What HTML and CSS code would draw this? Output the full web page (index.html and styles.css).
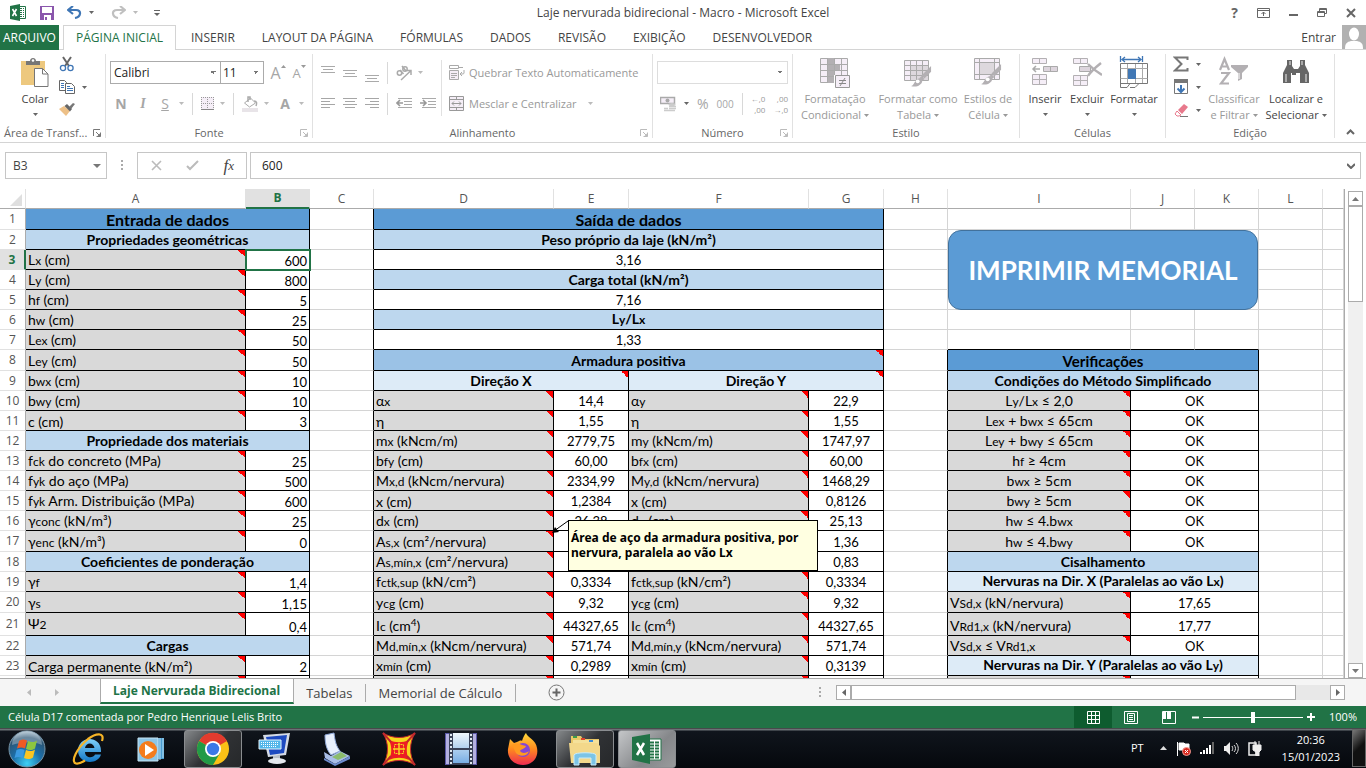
FILE: index.html
```html
<!DOCTYPE html>
<html lang="pt-BR">
<head>
<meta charset="utf-8">
<title>Laje nervurada bidirecional - Macro - Microsoft Excel</title>
<link rel="stylesheet" href="styles.css">
</head>
<body>
<svg class="defs" aria-hidden="true">
  <symbol id="arrow" viewBox="0 0 5 3"><path d="M0 0h5L2.500 3z" fill="currentColor"/></symbol>
  <symbol id="launch" viewBox="0 0 8 8"><path d="M.5 7V.5H7M3 3l3 3M7.500 3.500v4h-4" fill="none" stroke="currentColor"/><path d="M7.500 4v3.500H4z" fill="currentColor"/></symbol>
  <symbol id="al" viewBox="0 0 14 11"><path d="M0 .5h14M0 3.500h9M0 6.500h14M0 9.500h9" stroke="currentColor"/></symbol>
  <symbol id="ac" viewBox="0 0 14 11"><path d="M0 .5h14M2 3.500h10M0 6.500h14M2 9.500h10" stroke="currentColor"/></symbol>
  <symbol id="ar" viewBox="0 0 14 11"><path d="M0 .5h14M5 3.500h9M0 6.500h14M5 9.500h9" stroke="currentColor"/></symbol>
  <symbol id="brush" viewBox="0 0 24 24"><path d="M22 1v6l-7 7-3-3z" fill="#b3b0b3"/><path d="M12 11.500l3 3-2 2-3-3z" fill="#b3b0b3"/><path d="M9 14c3-1 5 2 3 5-3 4-8 4-11 3 4-1 3-6 8-8z" fill="#b3b0b3"/><circle cx="8" cy="17" r="2" fill="#fff"/></symbol>
</svg>

<header class="titlebar">
  <div class="quick">
    <svg width="17" height="17" viewBox="0 0 17 17"><path d="M8 2.500h7.500v12H8" fill="#fff" stroke="#217346"/><path d="M10 4.500h4M10 6.500h4M10 8.500h4M10 10.500h4M10 12.500h4" stroke="#217346" stroke-dasharray="2 1"/><path d="M0 2l10-2v17L0 15z" fill="#217346"/><path d="M2.500 5l4 7M6.500 5l-4 7" stroke="#fff" stroke-width="1.600"/></svg>
    <button class="plain" aria-label="Salvar"><svg width="14" height="14" viewBox="0 0 14 14"><path d="M0 0h14v14H0z" fill="#8a56ac"/><path d="M2 1h10v6H2zM4 9h7v5H4z" fill="#fff"/><path d="M5 11h2v3H5z" fill="#8a56ac"/></svg></button>
    <button class="plain" aria-label="Desfazer"><svg width="15" height="13" viewBox="0 0 15 13"><path d="M2 4h7c6 0 5 7-1 8" fill="none" stroke="#3f76b5" stroke-width="2.200"/><path d="M6 0L1 4l5 4" fill="none" stroke="#3f76b5" stroke-width="2.200"/></svg></button>
    <svg class="ar"><use href="#arrow"/></svg>
    <button class="plain redo" aria-label="Refazer"><svg width="15" height="13" viewBox="0 0 15 13"><path d="M13 4H6C0 4 1 11 7 12" fill="none" stroke="#c0c0c0" stroke-width="2.200"/><path d="M9 0l5 4-5 4" fill="none" stroke="#c0c0c0" stroke-width="2.200"/></svg></button>
    <svg class="ar off"><use href="#arrow"/></svg>
    <svg class="more" width="6" height="6" viewBox="0 0 6 6"><path d="M0 .5h6" stroke="#666"/><path d="M0 3h6L3 6z" fill="#666"/></svg>
  </div>
  <h1>Laje nervurada bidirecional - Macro - Microsoft Excel</h1>
  <div class="winbtns">
    <button class="plain help" aria-label="Ajuda">?</button>
    <button class="plain" aria-label="Opções da faixa"><svg width="13" height="10" viewBox="0 0 13 10"><path d="M.5.5h12v9H.5zM1 2.500h11M6.500 8V4M4.500 6l2-2 2 2" fill="none" stroke="#666"/></svg></button>
    <button class="plain" aria-label="Minimizar"><svg width="9" height="10" viewBox="0 0 9 10"><path d="M0 7h9" stroke="#666" stroke-width="2"/></svg></button>
    <button class="plain" aria-label="Restaurar"><svg width="10" height="10" viewBox="0 0 10 10"><path d="M.5 3.500h7v5h-7zM2.500 3V.5h7v5H8M.5 4.500h7M2.500 1.500h7" fill="none" stroke="#666"/></svg></button>
    <button class="plain" aria-label="Fechar"><svg width="10" height="10" viewBox="0 0 10 10"><path d="M1 1l8 8M9 1L1 9" stroke="#666" stroke-width="2"/></svg></button>
  </div>
</header>

<nav class="tabs">
  <a class="file" href="#arquivo">ARQUIVO</a>
  <a class="on" href="#inicio">PÁGINA INICIAL</a>
  <a href="#inserir">INSERIR</a>
  <a href="#layout">LAYOUT DA PÁGINA</a>
  <a href="#formulas">FÓRMULAS</a>
  <a href="#dados">DADOS</a>
  <a href="#revisao">REVISÃO</a>
  <a href="#exibicao">EXIBIÇÃO</a>
  <a href="#dev">DESENVOLVEDOR</a>
  <a class="login" href="#entrar">Entrar
    <svg width="24" height="24" viewBox="0 0 24 24"><path d="M0 0h24v24H0z" fill="#b1b1b1"/><ellipse cx="12" cy="9" rx="5" ry="6.500" fill="#fff"/><path d="M3 24c0-6 2-7 6-8h6c4 1 6 2 6 8z" fill="#fff"/></svg></a>
</nav>

<section class="ribbon">
  <div class="group clip">
    <div class="body">
      <button class="big"><svg width="30" height="32" viewBox="0 0 30 32"><path d="M1 5h24v24H1z" fill="#edc87e"/><path d="M6 9V5h4c0-4 6-4 6 0h4v4z" fill="#767676"/><circle cx="13" cy="4.500" r="1.300" fill="#fff"/><path d="M14.500 12.500h8l5.500 5.500v12.500H14.500z" fill="#fff" stroke="#767676"/><path d="M22.500 12.500V18H28" fill="none" stroke="#767676"/></svg><span>Colar</span><svg class="ar"><use href="#arrow"/></svg></button>
      <div class="stack">
        <button class="plain" aria-label="Recortar"><svg width="16" height="16" viewBox="0 0 16 16"><path d="M4 1l6 9M12 1L6 10" stroke="#666" stroke-width="2"/><circle cx="4" cy="12" r="2.600" fill="none" stroke="#3f76b5" stroke-width="1.300"/><circle cx="11.500" cy="12" r="2.600" fill="none" stroke="#3f76b5" stroke-width="1.300"/></svg></button>
        <span><button class="plain" aria-label="Copiar"><svg width="16" height="16" viewBox="0 0 16 16"><path d="M.5 1.500h5l2 2v8h-7z" fill="#fff" stroke="#666"/><path d="M6.500 4.500h6l3 3v7h-9z" fill="#fff" stroke="#666"/><path d="M2 4.500h3M2 6.500h3M2 8.500h3M8 7.500h3M8 9.500h6M8 11.500h6" stroke="#3f76b5"/></svg></button><svg class="ar"><use href="#arrow"/></svg></span>
        <button class="plain" aria-label="Pincel de Formatação"><svg width="16" height="14" viewBox="0 0 16 14"><path d="M0 7l5-3 6 5-4 5z" fill="#edc087"/><path d="M5.500 4L8 2l5 5-2 2.500z" fill="#666"/><path d="M10 5l4-4 2 1-4 5z" fill="#777"/></svg></button>
      </div>
    </div>
    <footer>Área de Transf... <svg><use href="#launch"/></svg></footer>
  </div>

  <div class="group font">
    <div class="body rows">
      <div class="row">
        <select class="fname" aria-label="Fonte"><option>Calibri</option></select><select class="fsize" aria-label="Tamanho"><option>11</option></select>
        <button class="plain g grow" aria-label="Aumentar">A<svg width="5" height="3"><path d="M0 3h5L2.500 0z" fill="#999"/></svg></button>
        <button class="plain g shrink" aria-label="Diminuir">A<svg width="5" height="3"><path d="M0 0h5L2.500 3z" fill="#999"/></svg></button>
      </div>
      <div class="row fmt">
        <button class="plain g"><b>N</b></button>
        <button class="plain g"><i class="it">I</i></button>
        <button class="plain g"><u>S</u></button>
        <svg class="ar off"><use href="#arrow"/></svg>
        <span class="sep"></span>
        <button class="plain" aria-label="Bordas"><svg width="13" height="13" viewBox="0 0 13 13"><path d="M0 0h13v13H0z" fill="#f5eef7"/><path d="M.5 0v12M6.500 0v12M12.500 0v12M0 .5h13M0 6.500h13" stroke="#999" stroke-dasharray="1 1"/><path d="M0 12.500h13" stroke="#888"/></svg></button>
        <svg class="ar off"><use href="#arrow"/></svg>
        <span class="sep"></span>
        <button class="plain" aria-label="Preenchimento"><svg width="16" height="16" viewBox="0 0 16 16"><path d="M0 12h16v4H0z" fill="#e8e4e8"/><path d="M2.500 7l6-5 5 5-6 4z" fill="#fff" stroke="#aaa"/><path d="M6 6V1h2v3M12 5c3 0 3 2 2 5" fill="none" stroke="#aaa" stroke-width="1.500"/></svg></button>
        <svg class="ar off"><use href="#arrow"/></svg>
        <button class="plain g"><b class="col">A</b></button>
        <svg class="ar off"><use href="#arrow"/></svg>
      </div>
    </div>
    <footer class="c">Fonte <svg class="off"><use href="#launch"/></svg></footer>
  </div>

  <div class="group align">
    <div class="body">
      <div class="rows">
        <div class="row">
          <button class="plain g" aria-label="Acima"><svg width="14" height="20" viewBox="0 0 14 20"><path d="M0 3.500h14M2 6.500h10M0 9.500h14" stroke="#aaa"/></svg></button>
          <button class="plain g" aria-label="Meio"><svg width="14" height="20" viewBox="0 0 14 20"><path d="M0 7.500h14M2 10.500h10M0 13.500h14" stroke="#aaa"/></svg></button>
          <button class="plain g" aria-label="Abaixo"><svg width="14" height="20" viewBox="0 0 14 20"><path d="M0 12.500h14M2 15.500h10M0 18.500h14" stroke="#aaa"/></svg></button>
          <span class="sep"></span>
          <button class="plain g" aria-label="Orientação"><svg width="16" height="16" viewBox="0 0 16 16"><g fill="none" stroke="#aaa" stroke-width="1.500"><circle cx="3.500" cy="8" r="2.200"/><path d="M4 5l3.500 4M6 1l4 5"/><circle cx="9" cy="4" r="2.200"/><path d="M5 15l9.500-9M11 5.500h4V10"/></g></svg></button>
          <svg class="ar off"><use href="#arrow"/></svg>
        </div>
        <div class="row">
          <button class="plain g" aria-label="Esquerda"><svg width="14" height="11"><use href="#al"/></svg></button>
          <button class="plain g" aria-label="Centro"><svg width="14" height="11"><use href="#ac"/></svg></button>
          <button class="plain g" aria-label="Direita"><svg width="14" height="11"><use href="#ar"/></svg></button>
          <span class="sep"></span>
          <button class="plain g" aria-label="Diminuir recuo"><svg width="16" height="11" viewBox="0 0 16 11"><path d="M2 .5h14M8 3.500h8M8 6.500h8M2 9.500h14" stroke="#aaa"/><path d="M7 5H1M4 2L1 5l3 3" fill="none" stroke="#999" stroke-width="1.600"/></svg></button>
          <button class="plain g" aria-label="Aumentar recuo"><svg width="16" height="11" viewBox="0 0 16 11"><path d="M2 .5h14M8 3.500h8M8 6.500h8M2 9.500h14" stroke="#aaa"/><path d="M0 5h6M3 2l3 3-3 3" fill="none" stroke="#999" stroke-width="1.600"/></svg></button>
        </div>
      </div>
      <div class="rows texts">
        <button class="plain"><svg width="16" height="16" viewBox="0 0 16 16"><path d="M.5.5h9v3h-9zM9.500 2.500H14" fill="none" stroke="#aaa"/><path d="M.5 5.500h9v9h-9z" fill="#f5eef7" stroke="#aaa"/><path d="M2 8.500h6M2 10.500h6M2 12.500h4" stroke="#aaa"/><path d="M15 5v3c0 1-1 1-4 1M13 7l-2 2 2 2" fill="none" stroke="#aaa"/></svg>Quebrar Texto Automaticamente</button>
        <button class="plain"><svg width="16" height="15" viewBox="0 0 16 15"><path d="M.5.5h14v14H.5z" fill="#f5eef7" stroke="#999"/><path d="M0 3.500h15M0 11.500h15M7.500 0v3M7.500 12v3M3 7.500h9M5 5.500l-2 2 2 2M10 5.500l2 2-2 2" fill="none" stroke="#999"/></svg>Mesclar e Centralizar<svg class="ar off"><use href="#arrow"/></svg></button>
      </div>
    </div>
    <footer class="c">Alinhamento <svg class="off"><use href="#launch"/></svg></footer>
  </div>

  <div class="group number">
    <div class="body rows">
      <select class="fmtsel" aria-label="Formato de número"><option></option></select>
      <div class="row">
        <button class="plain g" aria-label="Moeda"><svg width="16" height="16" viewBox="0 0 16 16"><path d="M.5 1.500h14v6H.5z" fill="#f5eef7" stroke="#aaa" stroke-width="1.500"/><circle cx="7.500" cy="4.500" r="2" fill="#aaa"/><ellipse cx="12" cy="8.500" rx="3.500" ry="1.500" fill="#ccc"/><path d="M9 10.500h7M9 12.500h7M4 12.500h4M4 14.500h11" stroke="#ccc" stroke-width="1.500"/></svg></button>
        <svg class="ar"><use href="#arrow"/></svg>
        <button class="plain g pct">%</button>
        <button class="plain g mil">000</button>
        <span class="sep"></span>
        <button class="plain dec" aria-label="Aumentar casas"><span>←,0</span><span>,00</span></button>
        <button class="plain dec" aria-label="Diminuir casas"><span>,00</span><span>→,0</span></button>
      </div>
    </div>
    <footer class="c">Número <svg class="off"><use href="#launch"/></svg></footer>
  </div>

  <div class="group style">
    <div class="body">
      <button class="big dis w84"><svg width="30" height="32" viewBox="0 0 30 32"><path d="M.5 2.500h27v24H.5z" fill="#f5eef7" stroke="#aaa"/><path d="M8 2h6v25H8zM8 9h12v5H8z" fill="#b3b0b3"/><path d="M.5 8.500h27M.5 14.500h27M.5 20.500h27M7.500 2v24M14.500 2v24M21.500 2v24" stroke="#aaa"/><path d="M14 19h16v13H14z" fill="#fff"/><path d="M15.500 19.500h14v12h-14z" fill="#f5eef7" stroke="#999"/><path d="M19 24.500h7M19 27.500h7M25 22l-5 8" stroke="#888"/></svg><span>Formatação<br>Condicional <svg class="ar"><use href="#arrow"/></svg></span></button>
      <button class="big dis w82"><svg width="30" height="32" viewBox="0 0 30 32"><path d="M1.500 4.500h24v20h-24z" fill="#f5eef7" stroke="#aaa"/><path d="M8 9h17v15H8z" fill="#ddd8dd"/><path d="M1.500 9.500h24M1.500 14.500h24M1.500 19.500h24M7.500 4v20M13.500 4v20M19.500 4v20" stroke="#aaa"/><use href="#brush" x="7" y="9" width="23" height="23"/></svg><span>Formatar como<br>Tabela <svg class="ar"><use href="#arrow"/></svg></span></button>
      <button class="big dis w58"><svg width="30" height="32" viewBox="0 0 30 32"><path d="M1.500 2.500h25v21h-25z" fill="#f5eef7" stroke="#aaa"/><path d="M7 7h15v11H7z" fill="#ddd8dd"/><path d="M1.500 6.500h25M1.500 18.500h25M6.500 2v21M21.500 2v21" stroke="#aaa"/><use href="#brush" x="7" y="7" width="23" height="23"/></svg><span>Estilos de<br>Célula <svg class="ar"><use href="#arrow"/></svg></span></button>
    </div>
    <footer>Estilo</footer>
  </div>

  <div class="group cells">
    <div class="body">
      <button class="big w42"><svg width="30" height="32" viewBox="0 0 30 32"><path d="M2.500 2.500h14v5h-14zM9.500 2v5M2.500 18.500h14v10h-14zM2.500 23.500h14M9.500 18v10" fill="#f5eef7" stroke="#b3b0b3"/><path d="M13.500 10.500h14v5h-14zM20.500 10v5" fill="#ddd5dd" stroke="#aaa"/><path d="M3 13h7M6 10l-3 3 3 3" fill="none" stroke="#aaa" stroke-width="1.500"/></svg><span>Inserir</span><svg class="ar"><use href="#arrow"/></svg></button>
      <button class="big w42"><svg width="30" height="32" viewBox="0 0 30 32"><path d="M1.500 2.500h14v5h-14zM8.500 2v5M1.500 19.500h14v10h-14zM1.500 24.500h14M8.500 19v10" fill="#f5eef7" stroke="#b3b0b3"/><path d="M7.500 10.500h11v5h-11z" fill="#ddd5dd" stroke="#aaa"/><path d="M16 8c4 4 9 8 14 11M29 7c-5 4-10 8-13 13" fill="none" stroke="#b3b0b3" stroke-width="2.400"/></svg><span>Excluir</span><svg class="ar"><use href="#arrow"/></svg></button>
      <button class="big w52"><svg width="30" height="32" viewBox="0 0 30 32"><path d="M1.500 0v6M23.500 0v6M3 3.500h19M6 1L3 3.500 6 6M19 1l3 2.500L19 6" fill="none" stroke="#3f76b5" stroke-width="1.300"/><path d="M1.500 7.500h27v20h-27z" fill="#fff" stroke="#777"/><path d="M1.500 12.500h27M1.500 22.500h27M8.500 8v19M16.500 8v19M23.500 8v19" stroke="#aaa"/><path d="M9 13h8v10H9z" fill="#4178b5"/><path d="M1.500 27v4.500H8l3-4M11 31.500h5l4-4" fill="none" stroke="#777"/></svg><span>Formatar</span><svg class="ar"><use href="#arrow"/></svg></button>
    </div>
    <footer>Células</footer>
  </div>

  <div class="group edit">
    <div class="body">
      <div class="stack">
        <span><button class="plain" aria-label="Soma"><svg width="16" height="16" viewBox="0 0 16 16"><path d="M14.500 4V1.500H2L8.500 8 2 14.500h12.500V12" fill="none" stroke="#777" stroke-width="2"/></svg></button><svg class="ar"><use href="#arrow"/></svg></span>
        <span><button class="plain" aria-label="Preencher"><svg width="16" height="16" viewBox="0 0 16 16"><path d="M1.500 1.500h13v13h-13z" fill="#fff" stroke="#777"/><path d="M1 0h14v4H1z" fill="#777"/><path d="M8 6v7M4.500 9.500L8 13l3.500-3.500" fill="none" stroke="#3f76b5" stroke-width="2"/></svg></button><svg class="ar"><use href="#arrow"/></svg></span>
        <span><button class="plain" aria-label="Limpar"><svg width="16" height="16" viewBox="0 0 16 16"><path d="M5 8l6-6 4 3-6 7z" fill="#e8798c"/><path d="M4 9l4 4-2 1H4l-2-2z" fill="#fff" stroke="#e8798c"/><path d="M7 14.500h8" stroke="#777"/></svg></button><svg class="ar"><use href="#arrow"/></svg></span>
      </div>
      <button class="big dis w62"><svg width="30" height="32" viewBox="0 0 30 32"><path d="M1 14L5.500 3 10 14M2.500 10.500h6M2 17h8L2 27.500h8" fill="none" stroke="#b3b0b3" stroke-width="2.200"/><path d="M12 9h17v2l-6 6v6l-4 2v-8l-7-6z" fill="#b3b0b3"/><path d="M20 17v6" stroke="#fff"/></svg><span>Classificar<br>e Filtrar <svg class="ar"><use href="#arrow"/></svg></span></button>
      <button class="big w62"><svg width="30" height="32" viewBox="0 0 30 32"><path d="M2 27V17l4-8V4h5v6l2 3h4l2-3V4h5v5l4 8v10h-9V17h-4v2h-4v-2h-1v10z" fill="#666"/><path d="M9 5v4M21 5v4M5 18v8M25 18v8" stroke="#eee"/></svg><span>Localizar e<br>Selecionar <svg class="ar"><use href="#arrow"/></svg></span></button>
    </div>
    <footer>Edição</footer>
  </div>
  <button class="plain collapse" aria-label="Recolher"><svg width="9" height="6" viewBox="0 0 9 6"><path d="M1 5l3.500-3.500L8 5" fill="none" stroke="#666" stroke-width="2"/></svg></button>
</section>

<section class="formula">
  <button class="namebox">B3<svg class="tri" viewBox="0 0 8 4"><path d="M0 0h8L4 4z" fill="#777"/></svg></button>
  <svg class="dots" width="2" height="11"><path d="M0 0h2v2H0zM0 4h2v2H0zM0 8h2v2H0z" fill="#aaa"/></svg>
  <div class="fxbox">
    <button class="plain" aria-label="Cancelar"><svg width="11" height="11" viewBox="0 0 11 11"><path d="M1 1l9 9M10 1l-9 9" stroke="#bbb" stroke-width="1.600"/></svg></button>
    <button class="plain" aria-label="Inserir"><svg width="13" height="11" viewBox="0 0 13 11"><path d="M1 6l3 3 8-8" fill="none" stroke="#bbb" stroke-width="2"/></svg></button>
    <button class="plain fx">f<small>x</small></button>
  </div>
  <div class="entry"><input aria-label="Barra de fórmulas" value="600"><svg width="8" height="6" viewBox="0 0 8 6"><path d="M0 1l4 4 4-4" fill="none" stroke="#666" stroke-width="2"/></svg></div>
</section>

<main class="work">
  <div class="sheet">
    <table>
      <colgroup><col class="c0"><col class="cA"><col class="c64"><col class="c64"><col class="cD"><col class="cE"><col class="cD"><col class="cE"><col class="c64"><col class="cI"><col class="c64"><col class="c64"><col class="c64"><col></colgroup>
      <thead><tr><th class="corner"><svg width="12" height="12" viewBox="0 0 12 12"><path d="M12 0v12H0z" fill="#dfdfdf"/></svg></th><th>A</th><th class="cur">B</th><th>C</th><th>D</th><th>E</th><th>F</th><th>G</th><th>H</th><th>I</th><th>J</th><th>K</th><th>L</th><th></th></tr></thead>
      <tbody>
        <tr class="h21"><th>1</th><td colspan="2" class="k t1 top">Entrada de dados</td><td class="kr"></td><td colspan="4" class="k t1 top">Saída de dados</td><td></td><td></td><td></td><td></td><td></td><td></td></tr>
        <tr><th>2</th><td colspan="2" class="k t2">Propriedades geométricas</td><td class="kr"></td><td colspan="4" class="k t2">Peso próprio da laje (kN/m²)</td><td></td><td></td><td></td><td></td><td></td><td></td></tr>
        <tr><th class="cur">3</th><td class="k lab n">L<small>x</small> (cm)</td><td class="k num sel">600</td><td class="kr"></td><td colspan="4" class="k val">3,16</td><td></td><td></td><td></td><td></td><td></td><td></td></tr>
        <tr><th>4</th><td class="k lab n">L<small>y</small> (cm)</td><td class="k num">800</td><td class="kr"></td><td colspan="4" class="k t2">Carga total (kN/m²)</td><td></td><td></td><td></td><td></td><td></td><td></td></tr>
        <tr><th>5</th><td class="k lab n">h<small>f</small> (cm)</td><td class="k num">5</td><td class="kr"></td><td colspan="4" class="k val">7,16</td><td></td><td></td><td></td><td></td><td></td><td></td></tr>
        <tr><th>6</th><td class="k lab n">h<small>w</small> (cm)</td><td class="k num">25</td><td class="kr"></td><td colspan="4" class="k t2">L<small>y</small>/L<small>x</small></td><td></td><td></td><td></td><td></td><td></td><td></td></tr>
        <tr><th>7</th><td class="k lab n">L<small>ex</small> (cm)</td><td class="k num">50</td><td class="kr"></td><td colspan="4" class="k val">1,33</td><td></td><td class="kb"></td><td class="kb"></td><td class="kb"></td><td></td><td></td></tr>
        <tr class="h21"><th>8</th><td class="k lab n">L<small>ey</small> (cm)</td><td class="k num">50</td><td class="kr"></td><td colspan="4" class="k t3 n">Armadura positiva</td><td class="kr"></td><td colspan="3" class="k t1">Verificações</td><td></td><td></td></tr>
        <tr><th>9</th><td class="k lab n">b<small>wx</small> (cm)</td><td class="k num">10</td><td class="kr"></td><td colspan="2" class="k t4 n">Direção X</td><td colspan="2" class="k t4 n">Direção Y</td><td class="kr"></td><td colspan="3" class="k t2">Condições do Método Simplificado</td><td></td><td></td></tr>
        <tr><th>10</th><td class="k lab n">b<small>wy</small> (cm)</td><td class="k num">10</td><td class="kr"></td><td class="k lab n">α<small>x</small></td><td class="k val">14,4</td><td class="k lab n">α<small>y</small></td><td class="k val">22,9</td><td class="kr"></td><td class="k lab mid n">L<small>y</small>/L<small>x</small> ≤ 2,0</td><td colspan="2" class="k val">OK</td><td></td><td></td></tr>
        <tr><th>11</th><td class="k lab n">c (cm)</td><td class="k num">3</td><td class="kr"></td><td class="k lab n">η</td><td class="k val">1,55</td><td class="k lab n">η</td><td class="k val">1,55</td><td class="kr"></td><td class="k lab mid n">L<small>ex</small> + b<small>wx</small> ≤ 65cm</td><td colspan="2" class="k val">OK</td><td></td><td></td></tr>
        <tr><th>12</th><td colspan="2" class="k t2">Propriedade dos materiais</td><td class="kr"></td><td class="k lab n">m<small>x</small> (kNcm/m)</td><td class="k val">2779,75</td><td class="k lab n">m<small>y</small> (kNcm/m)</td><td class="k val">1747,97</td><td class="kr"></td><td class="k lab mid n">L<small>ey</small> + b<small>wy</small> ≤ 65cm</td><td colspan="2" class="k val">OK</td><td></td><td></td></tr>
        <tr><th>13</th><td class="k lab n">f<small>ck</small> do concreto (MPa)</td><td class="k num">25</td><td class="kr"></td><td class="k lab n">b<small>fy</small> (cm)</td><td class="k val">60,00</td><td class="k lab n">b<small>fx</small> (cm)</td><td class="k val">60,00</td><td class="kr"></td><td class="k lab mid n">h<small>f</small> ≥ 4cm</td><td colspan="2" class="k val">OK</td><td></td><td></td></tr>
        <tr><th>14</th><td class="k lab n">f<small>yk</small> do aço (MPa)</td><td class="k num">500</td><td class="kr"></td><td class="k lab n">M<small>x,d</small> (kNcm/nervura)</td><td class="k val">2334,99</td><td class="k lab n">M<small>y,d</small> (kNcm/nervura)</td><td class="k val">1468,29</td><td class="kr"></td><td class="k lab mid n">b<small>wx</small> ≥ 5cm</td><td colspan="2" class="k val">OK</td><td></td><td></td></tr>
        <tr><th>15</th><td class="k lab n">f<small>yk</small> Arm. Distribuição (MPa)</td><td class="k num">600</td><td class="kr"></td><td class="k lab n">x (cm)</td><td class="k val">1,2384</td><td class="k lab n">x (cm)</td><td class="k val">0,8126</td><td class="kr"></td><td class="k lab mid n">b<small>wy</small> ≥ 5cm</td><td colspan="2" class="k val">OK</td><td></td><td></td></tr>
        <tr><th>16</th><td class="k lab n">γ<small>conc</small> (kN/m³)</td><td class="k num">25</td><td class="kr"></td><td class="k lab n">d<small>x</small> (cm)</td><td class="k val">26,38</td><td class="k lab n">d<small>y</small> (cm)</td><td class="k val">25,13</td><td class="kr"></td><td class="k lab mid n">h<small>w</small> ≤ 4.b<small>wx</small></td><td colspan="2" class="k val">OK</td><td></td><td></td></tr>
        <tr class="h21"><th>17</th><td class="k lab n">γ<small>enc</small> (kN/m³)</td><td class="k num">0</td><td class="kr"></td><td class="k lab n">A<small>s,x</small> (cm²/nervura)</td><td class="k val"></td><td class="k lab n"></td><td class="k val">1,36</td><td class="kr"></td><td class="k lab mid n">h<small>w</small> ≤ 4.b<small>wy</small></td><td colspan="2" class="k val">OK</td><td></td><td></td></tr>
        <tr><th>18</th><td colspan="2" class="k t2">Coeficientes de ponderação</td><td class="kr"></td><td class="k lab n">A<small>s,mín,x</small> (cm²/nervura)</td><td class="k val"></td><td class="k lab n"></td><td class="k val">0,83</td><td class="kr"></td><td colspan="3" class="k t2">Cisalhamento</td><td></td><td></td></tr>
        <tr><th>19</th><td class="k lab n">γ<small>f</small></td><td class="k num">1,4</td><td class="kr"></td><td class="k lab n">f<small>ctk,sup</small> (kN/cm²)</td><td class="k val">0,3334</td><td class="k lab n">f<small>ctk,sup</small> (kN/cm²)</td><td class="k val">0,3334</td><td class="kr"></td><td colspan="3" class="k t4">Nervuras na Dir. X (Paralelas ao vão L<small>x</small>)</td><td></td><td></td></tr>
        <tr class="h21"><th>20</th><td class="k lab n">γ<small>s</small></td><td class="k num">1,15</td><td class="kr"></td><td class="k lab n">y<small>cg</small> (cm)</td><td class="k val">9,32</td><td class="k lab n">y<small>cg</small> (cm)</td><td class="k val">9,32</td><td class="kr"></td><td class="k lab n">V<small>Sd,x</small> (kN/nervura)</td><td colspan="2" class="k val">17,65</td><td></td><td></td></tr>
        <tr class="h23"><th>21</th><td class="k lab n psi">Ψ<small>2</small></td><td class="k num">0,4</td><td class="kr"></td><td class="k lab n">I<small>c</small> (cm<sup>4</sup>)</td><td class="k val">44327,65</td><td class="k lab n">I<small>c</small> (cm<sup>4</sup>)</td><td class="k val">44327,65</td><td class="kr"></td><td class="k lab n">V<small>Rd1,x</small> (kN/nervura)</td><td colspan="2" class="k val">17,77</td><td></td><td></td></tr>
        <tr><th>22</th><td colspan="2" class="k t2">Cargas</td><td class="kr"></td><td class="k lab n">M<small>d,mín,x</small> (kNcm/nervura)</td><td class="k val">571,74</td><td class="k lab n">M<small>d,mín,y</small> (kNcm/nervura)</td><td class="k val">571,74</td><td class="kr"></td><td class="k lab n">V<small>Sd,x</small> ≤ V<small>Rd1,x</small></td><td colspan="2" class="k val">OK</td><td></td><td></td></tr>
        <tr><th>23</th><td class="k lab n">Carga permanente (kN/m²)</td><td class="k num">2</td><td class="kr"></td><td class="k lab n">x<small>mín</small> (cm)</td><td class="k val">0,2989</td><td class="k lab n">x<small>mín</small> (cm)</td><td class="k val">0,3139</td><td class="kr"></td><td colspan="3" class="k t4">Nervuras na Dir. Y (Paralelas ao vão L<small>y</small>)</td><td></td><td></td></tr>
        <tr><th></th><td class="k lab n"></td><td class="k num"></td><td class="kr"></td><td class="k lab n"></td><td class="k val"></td><td class="k lab n"></td><td class="k val"></td><td class="kr"></td><td class="k lab n"></td><td colspan="2" class="k val"></td><td></td><td></td></tr>
      </tbody>
    </table>
    <button class="print">IMPRIMIR MEMORIAL</button>
    <svg class="leader" width="16" height="14" viewBox="0 0 16 14"><path d="M16 1L2 11" stroke="#000"/><path d="M0 13l3-6 4 5z"/></svg>
    <div class="note" role="tooltip">Área de aço da armadura positiva, por nervura, paralela ao vão Lx</div>
  </div>
  <div class="vscroll">
    <button aria-label="Rolar acima"><svg width="7" height="4"><path d="M0 4h7L3.500 0z" fill="#777"/></svg></button>
    <div class="track"><div class="thumb"></div></div>
    <button aria-label="Rolar abaixo"><svg width="7" height="4"><path d="M0 0h7L3.500 4z" fill="#777"/></svg></button>
  </div>
</main>

<nav class="sheettabs">
  <div class="navs"><svg width="4" height="7"><path d="M4 0v7L0 3.500z" fill="#bbb"/></svg><svg width="4" height="7"><path d="M0 0v7l4-3.500z" fill="#bbb"/></svg></div>
  <a class="on" href="#s1">Laje Nervurada Bidirecional</a>
  <a href="#s2">Tabelas</a>
  <a href="#s3">Memorial de Cálculo</a>
  <button class="plain add" aria-label="Nova planilha"><svg width="17" height="17" viewBox="0 0 17 17"><circle cx="8.500" cy="8.500" r="7.500" fill="none" stroke="#777"/><path d="M8.500 4.500v8M4.500 8.500h8" stroke="#666" stroke-width="2"/></svg></button>
  <svg class="dots" width="2" height="11"><path d="M0 0h2v2H0zM0 4h2v2H0zM0 8h2v2H0z" fill="#aaa"/></svg>
  <div class="hscroll">
    <button aria-label="Rolar à esquerda"><svg width="4" height="7"><path d="M4 0v7L0 3.500z" fill="#666"/></svg></button>
    <div class="track"><div class="thumb"></div></div>
    <button aria-label="Rolar à direita"><svg width="4" height="7"><path d="M0 0v7l4-3.500z" fill="#666"/></svg></button>
  </div>
</nav>

<footer class="status">
  <span class="msg">Célula D17 comentada por Pedro Henrique Lelis Brito</span>
  <button class="on" aria-label="Normal"><svg width="13" height="13" viewBox="0 0 13 13"><path d="M.5.5h12v12H.5zM.5 4.500h12M.5 8.500h12M4.500 0v13M8.500 0v13" fill="none" stroke="#fff"/></svg></button>
  <button aria-label="Layout da página"><svg width="14" height="13" viewBox="0 0 14 13"><path d="M.5.5h13v12H.5zM3.500 2.500h7v8h-7zM5 4.500h4M5 6.500h4M5 8.500h4" fill="none" stroke="#fff"/></svg></button>
  <button aria-label="Quebra de página"><svg width="14" height="13" viewBox="0 0 14 13"><path d="M.5.5h13v12H.5z" fill="none" stroke="#fff"/><path d="M1 1h3v7H1zM5 1h4v7H5z" fill="#fff"/></svg></button>
  <button class="zm" aria-label="Reduzir"><svg width="7" height="7"><path d="M0 3.500h7" stroke="#fff" stroke-width="2"/></svg></button>
  <input type="range" aria-label="Zoom" min="10" max="190" value="100">
  <button class="zm" aria-label="Ampliar"><svg width="8" height="8"><path d="M0 4h8M4 0v8" stroke="#fff" stroke-width="2"/></svg></button>
  <span class="zoom">100%</span>
</footer>

<footer class="taskbar">
  <svg width="0" height="0"><defs>
    <radialGradient id="orb" cx=".5" cy=".9" r=".9"><stop offset="0" stop-color="#3fd0f5"/><stop offset=".45" stop-color="#1c6ea8"/><stop offset=".8" stop-color="#2b5574"/><stop offset="1" stop-color="#a8c0d0"/></radialGradient>
    <linearGradient id="ieb" x2="0" y2="1"><stop stop-color="#7fd0f8"/><stop offset="1" stop-color="#1378c8"/></linearGradient>
    <linearGradient id="filmg" x2="0" y2="1"><stop stop-color="#eef6fb"/><stop offset="1" stop-color="#79aee4"/></linearGradient>
    <linearGradient id="foxg" x2="0" y2="1"><stop stop-color="#ffd93b"/><stop offset=".5" stop-color="#ff8a1e"/><stop offset="1" stop-color="#ee2a52"/></linearGradient>
  </defs></svg>
  <button class="start" aria-label="Iniciar"><svg width="38" height="38" viewBox="0 0 38 38"><circle cx="19" cy="19" r="18" fill="url(#orb)" stroke="#7795a8"/><path d="M4 15a15 14 0 0 1 30 0c-9-4-20-3-30 0z" fill="#fff" opacity=".3"/><path d="M11 11c3-2 5-2 8-.5l-2 8c-3-1.500-5-1.500-8 0z" fill="#ee5a24"/><path d="M20 11c3 1.500 6 1.500 9-.5l-2 8c-3 2-6 2-9 .5z" fill="#8cc63f"/><path d="M8.500 20c3-1.500 5-1.500 8 0l-2 8c-3-1.500-5-1.500-8 0z" fill="#3b9ae1"/><path d="M18 20c3 1.500 6 1.500 9-.5l-2 8c-3 2-6 2-9 .5z" fill="#fcc521"/></svg></button>
  <button aria-label="Internet Explorer"><svg width="34" height="34" viewBox="0 0 34 34"><path d="M29 20H13c0 6 8 7 10 2.500h6C26 33 7 33 6 19 6 3 30 3 29 20zM13 16h9.500c-1-6-8.500-6-9.500 0z" fill="url(#ieb)"/><path d="M30 9C33 0 24 1 16 7 5 16-2 30 4 31.500c2 .5 5-.5 9-3" fill="none" stroke="#f6b426" stroke-width="2.200"/></svg></button>
  <button aria-label="Media Player"><svg width="34" height="34" viewBox="0 0 34 34"><path d="M18 6h12v21H18z" fill="#4a9bcf"/><path d="M26 6v22M29 6v20" stroke="#b9e2f5"/><path d="M4 6h20v23H4z" fill="#8dc6e6" stroke="#c8e6f5"/><circle cx="14" cy="18" r="9" fill="#f47c1c"/><path d="M11 12l9 6-9 6z" fill="#fff"/></svg></button>
  <button class="open" aria-label="Chrome"><svg width="34" height="34" viewBox="0 0 34 34"><circle cx="17" cy="17" r="16" fill="#fbc116"/><path d="M17 17L3.100 9A16 16 0 0 1 31 9z" fill="#e33b2e"/><path d="M17 17L3.100 9A16 16 0 0 0 17 33l7-12z" fill="#229a47"/><circle cx="17" cy="17" r="8" fill="#fff"/><circle cx="17" cy="17" r="6.200" fill="#3b78e7"/></svg></button>
  <button aria-label="Teclado virtual"><svg width="34" height="34" viewBox="0 0 34 34"><path d="M5 3l27-2-4 22-18 2z" fill="#d5dbe5"/><path d="M8 5l21-2-3 18-14 2z" fill="#1d4ac0"/><path d="M15 24l7-1v6h-7z" fill="#b9c0ca"/><ellipse cx="19" cy="29" rx="9" ry="3" fill="#e4e8ee"/><path d="M1 8h22v9H1z" fill="#53b6ea" stroke="#e6f6ff"/><path d="M3 10.500h18M3 12.500h18M5 14.500h14" stroke="#fff" stroke-dasharray="1 1"/></svg></button>
  <button aria-label="Scanner"><svg width="34" height="34" viewBox="0 0 34 34"><path d="M5 3l9-2c1 8 2 13 6 18l-9 4C6 17 5 10 5 3z" fill="#e8f0fc" stroke="#8fa8d8"/><path d="M4 20l7 4 9-5 10 5-15 8-10-6z" fill="#a9bee8"/><path d="M4 22v4l11 6 15-8v3l-15 7-11-6z" fill="#6d8cd0"/><path d="M12 25l9-5 6 4-9 4z" fill="#8cbc6c"/></svg></button>
  <button aria-label="TQS"><svg width="34" height="34" viewBox="0 0 34 34"><path d="M1 1c10 6 22 6 32 0-6 10-6 22 0 32-10-6-22-6-32 0 6-10 6-22 0-32z" fill="#f6d51c" stroke="#c1272d"/><path d="M7 8c7 3 13 3 20 0-3 7-3 13 0 20-7-3-13-3-20 0 3-7 3-13 0-20z" fill="#ed1c24"/><path d="M17 11v12M11 17h12" stroke="#f6d51c" stroke-width="1.500"/><path d="M12.500 12.500h9v9h-9z" fill="none" stroke="#f6d51c" stroke-dasharray="2 1"/><path d="M1 1l8 9M33 1l-8 9M1 33l8-9M33 33l-8-9" stroke="#c1272d" stroke-width="2"/></svg></button>
  <button aria-label="Vídeo"><svg width="34" height="34" viewBox="0 0 34 34"><path d="M1 1h32v32H1z" fill="#5a58a8"/><path d="M2 2h3v30H2zM29 2h3v30h-3z" fill="#b3b0e0"/><path d="M5 1h24v32H5z" fill="#3a4258"/><path d="M9 1h16v15H9zM9 18h16v13H9z" fill="url(#filmg)"/><path d="M7 2v30M27 2v30" stroke="#dfe8f0" stroke-width="2" stroke-dasharray="2 2"/></svg></button>
  <button aria-label="Firefox"><svg width="34" height="34" viewBox="0 0 34 34"><path d="M3 12l1-5 4 4 3-1c2-1 4-2 5-1 1-4 3-7 4-8 1 4 10 7 11 15 2 10-5 17-14 17S1 26 2 17z" fill="url(#foxg)"/><circle cx="17" cy="18" r="7" fill="#8446d6"/><path d="M6 13c4-3 8-1 10 0l4 1c-1 3-5 3-6 5 2 3 7 2 9 0-2 6-10 6-13 2-2-3-2-6-4-8z" fill="#ff9a20"/></svg></button>
  <button class="open" aria-label="Explorador"><svg width="34" height="34" viewBox="0 0 34 34"><path d="M3 4h10l2 3h16v24H3z" fill="#e9c766"/><path d="M5 8h26v22H5z" fill="#f5e19a"/><path d="M1 11h28l3 3v17H3z" fill="#f3d88a"/><path d="M5 4h4v2H5z" fill="#3b9b4a"/><path d="M13 6h4v2h-4z" fill="#d9442e"/><path d="M21 8h4v2h-4z" fill="#3b8ad9"/><path d="M6 33V23c0-3 22-3 22 0v10h-5v-7H11v7z" fill="#7cc4e6" stroke="#c8ecfa"/></svg></button>
  <button class="open lit" aria-label="Excel"><svg width="34" height="34" viewBox="0 0 34 34"><path d="M18 7h13v21H18z" fill="#fff" stroke="#217346"/><path d="M20 10.500h9M20 13.500h9M20 16.500h9M20 19.500h9M20 22.500h9M20 25.500h9" stroke="#217346" stroke-width="2" stroke-dasharray="4 1"/><path d="M2 5l18-3v30L2 28z" fill="#217346"/><path d="M7 11l7 12M14 11L7 23" stroke="#fff" stroke-width="2.500"/></svg></button>
  <div class="tray">
    <span class="lang">PT</span>
    <svg width="7" height="4"><path d="M0 4h7L3.500 0z" fill="#ddd"/></svg>
    <svg width="15" height="15" viewBox="0 0 15 15"><path d="M1.500 1v14M3 2h5l1 1h4v6H3z" fill="#fff" stroke="#fff"/><circle cx="10.500" cy="10.500" r="4" fill="#d9281e" stroke="#f09c95"/><path d="M9 9l3 3M12 9l-3 3" stroke="#fff"/></svg>
    <svg width="15" height="12" viewBox="0 0 15 12"><path d="M1 12v-2M4 12V8M7 12V6M10 12V3" stroke="#fff" stroke-width="2"/><path d="M13 12V0" stroke="#666" stroke-width="2"/></svg>
    <svg width="15" height="13" viewBox="0 0 15 13"><path d="M0 4h2l4-4v13l-4-4H0z" fill="#eee"/><path d="M8 4c1 2 1 3 0 5M10 3c2 2 2 5 0 7M12 1c3 3 3 8 0 11" fill="none" stroke="#ddd"/></svg>
    <svg width="14" height="15" viewBox="0 0 14 15"><path d="M1 2h7v12H1z" fill="none" stroke="#eee" stroke-width="1.500"/><path d="M5 4h8v5l-2 2v4H8v-4L5 9zM7 0v4M11 0v4" fill="#eee" stroke="#eee"/></svg>
    <div class="clock">20:36<br>15/01/2023</div>
    <button class="desk" aria-label="Mostrar área de trabalho"></button>
  </div>
</footer>
</body>
</html>
```
FILE: styles.css
```css
* { box-sizing: border-box; }
body {
  margin: 0; height: 100vh; overflow: hidden; display: flex; flex-direction: column;
  background: #fff; color: #444; font: 12px/16px "Open Sans", "Noto Sans", sans-serif;
}
button, select, input { font: inherit; color: inherit; margin: 0; }
button { padding: 0; }
a { color: inherit; text-decoration: none; }
svg { display: block; flex: none; }
.defs { width: 0; height: 0; position: absolute; }
.plain { border: 0; background: none; display: flex; align-items: center; }
.ar { width: 5px; height: 3px; color: #666; }
.off { color: #bbb; }

/* Title bar */
.titlebar { display: grid; grid-template-columns: 1fr auto 1fr; height: 25px; align-items: center; }
.titlebar h1 { margin: 0; font: inherit; }
.quick { display: flex; align-items: center; padding-left: 10px; }
.quick .plain { margin-left: 13px; }
.quick .ar { margin-left: 7px; }
.quick .redo { margin-left: 17px; }
.quick .more { margin-left: 16px; }
.winbtns { display: flex; justify-content: flex-end; align-items: center; gap: 19px; padding-right: 10px; }
.help { font-weight: bold; font-size: 14px; color: #666; }

/* Ribbon tabs */
.tabs { display: flex; height: 25px; line-height: 25px; border-bottom: 1px solid #d4d4d4; }
.tabs a { padding: 0 14px 0 13px; white-space: nowrap; height: 25px; }
.tabs .file { background: #217346; color: #fff; width: 59px; padding: 0 3px; }
.tabs .on { margin: 0 2px 0 4px; padding: 0 12px; border: 1px solid #d4d4d4; border-bottom: 0; background: #fff; color: #217346; line-height: 23px; width: 113px; }
.tabs .login { margin-left: auto; padding: 0; display: flex; gap: 6px; }

/* Ribbon */
.ribbon { display: flex; height: 93px; border-bottom: 1px solid #d4d4d4; padding: 4px 0; font-size: 11px; }
.group { display: flex; flex-direction: column; border-right: 1px solid #e1e1e1; height: 84px; flex: none; }
.group .body { display: flex; flex: 1; }
.group footer { height: 10px; line-height: 10px; display: flex; justify-content: center; align-items: center; color: #666; padding: 0 4px; }
.group footer svg { width: 8px; height: 8px; margin-left: auto; color: #777; }
.group footer svg.off { color: #bbb; }
.group footer.c::before { content: ""; width: 8px; margin-right: auto; }
.big { border: 0; background: none; display: flex; flex-direction: column; align-items: center; padding-top: 2px; text-align: center; white-space: nowrap; flex: none; }
.big > .ar { margin-top: 6px; }
.big > span { margin-top: 3px; }
.big span .ar { display: inline-block; vertical-align: 2px; }
.dis, .dis .ar { color: #999; }
.w42 { width: 42px; } .w52 { width: 52px; } .w58 { width: 58px; } .w62 { width: 62px; } .w82 { width: 82px; } .w84 { width: 84px; }
.stack { display: flex; flex-direction: column; gap: 7px; padding-top: 2px; }
.stack span { display: flex; align-items: center; gap: 7px; }
.clip { width: 106px; }
.clip .big { width: 42px; margin-left: 14px; }
.clip .stack { margin-left: 3px; }
.rows { display: flex; flex-direction: column; gap: 8px; padding-top: 7px; }
.group .body.rows { flex-direction: column; }
.row { display: flex; align-items: center; height: 23px; }
.g { color: #a6a6a6; justify-content: center; }
.sep { width: 1px; height: 22px; background: #d8d8d8; flex: none; }
select {
  appearance: none; border: 1px solid #ababab; border-radius: 0; height: 23px; padding: 0 3px; color: #222; font-size: 12px;
  background: linear-gradient(45deg, transparent 50%, #777 50%) right 7px top 9px / 3px 3px no-repeat,
    linear-gradient(-45deg, transparent 50%, #777 50%) right 4px top 9px / 3px 3px no-repeat, #fff;
}
.font { width: 207px; }
.font .body { padding-left: 4px; }
.fname { width: 111px; } .fsize { width: 43px; border-left: 0; padding-left: 2px; }
.grow { width: 22px; font-size: 16px; margin-left: 3px; align-items: flex-start; }
.shrink { width: 20px; font-size: 13px; align-items: flex-start; }
.fmt .g { width: 22px; font-size: 14px; }
.it { font-family: "Liberation Serif", serif; font-weight: bold; }
.fmt > .ar { margin-left: 3px; }
.fmt .sep { margin: 0 8px; }
.fmt .plain + .ar { margin-left: 6px; }
.fmt .ar + .g { margin-left: 5px; }
.fmt .g + .ar { margin-left: 3px; }
.align { width: 340px; }
.align .body { padding-left: 8px; }
.align .row { gap: 8px; }
.texts { margin-left: 5px; padding-left: 7px; border-left: 1px solid #e1e1e1; height: 56px; margin-top: 6px; padding-top: 1px; color: #999; }
.align .row > .ar { margin-left: -2px; }
.texts .plain { gap: 4px; height: 23px; white-space: nowrap; }
.texts .plain .ar { margin-left: 7px; }
.number { width: 140px; }
.number .body { padding-left: 4px; }
.fmtsel { width: 131px; border-color: #ddd; }
.number .row { gap: 8px; padding-left: 3px; }
.pct { font-size: 14px; } .mil { font-size: 10px; }
.group .dec { flex-direction: column; font-size: 8px; line-height: 11px; color: #999; align-items: flex-end; }
.style { width: 227px; }
.cells { width: 146px; }
.cells .body { padding-left: 4px; }
.edit { width: 169px; }
.edit .body { padding-left: 7px; }
.edit .stack { margin-right: 2px; }
.collapse { margin: auto 11px 3px auto; }

/* Formula bar */
.formula { display: flex; height: 46px; padding: 9px 5px 10px; align-items: center; }
.namebox, .fxbox, .entry { height: 27px; border: 1px solid #c6c6c6; background: #fff; display: flex; align-items: center; }
.namebox { width: 102px; justify-content: space-between; padding: 0 5px 0 7px; }
.tri { width: 8px; height: 4px; }
.formula .dots { margin: 0 14px; }
.fxbox { width: 110px; justify-content: space-between; padding: 0 12px 0 13px; margin-right: 3px; }
.fx { font: italic 17px/16px "Liberation Serif", serif; }
.fx small { font-size: 13px; }
.entry { flex: 1; padding: 0 5px 0 11px; }
.entry input { flex: 1; border: 0; outline: 0; padding: 0; color: #222; }

/* Worksheet */
.work { flex: 1; min-height: 0; display: flex; }
.sheet { flex: 1; min-width: 0; overflow: hidden; position: relative; border-right: 1px solid #ababab; }
table { width: 100%; table-layout: fixed; border-collapse: separate; border-spacing: 0; color: #000; font: 14px/18px Lato, "Open Sans", sans-serif; }
.c0 { width: 26px; } .cA { width: 220px; } .c64 { width: 64px; } .cD { width: 180px; } .cE { width: 75px; } .cI { width: 183px; }
tr { height: 20px; }
.h21 { height: 21px; } .h23 { height: 23px; }
th { font: 12px/18px "Open Sans", sans-serif; color: #555; padding: 0; border-right: 1px solid #ababab; border-bottom: 1px solid #e1e1e1; }
thead th { border-color: #e1e1e1; border-bottom-color: #ababab; line-height: 19px; }
.corner svg { margin: 3px 3px 0 auto; }
th.cur { background: #e1e1e1; color: #217346; font-weight: bold; }
thead th.cur { border-bottom: 2px solid #217346; line-height: 18px; }
tbody th.cur { border-right: 2px solid #217346; }
td { padding: 0 2px; border-right: 1px solid #d4d4d4; border-bottom: 1px solid #d4d4d4; vertical-align: bottom; white-space: nowrap; overflow: hidden; text-align: center; }
.k { border-color: #000; }
.kr { border-right-color: #000; }
.kb { border-bottom-color: #000; }
.t1, .t2, .t3, .t4 { font-weight: bold; background-color: #5b9bd5; }
.t1 { font-size: 15px; }
.top { font-size: 16px; }
.t2 { background-color: #bdd7ee; } .t3 { background-color: #9bc2e6; } .t4 { background-color: #ddebf7; }
.lab { background-color: #d9d9d9; text-align: left; line-height: 16px; }
.psi { vertical-align: middle; }
.mid { text-align: center; }
.num { text-align: right; font-size: 13px; line-height: 16px; }
.val { font-size: 13px; }
.n { background-image: linear-gradient(to bottom left, #f00 50%, transparent 50%); background-size: 7px 7px; background-position: top right; background-repeat: no-repeat; }
.sel { outline: 2px solid #217346; outline-offset: -1px; }
td small { font-size: 12px; }
td sup { font-size: 10px; line-height: 0; vertical-align: 5px; }
.print { position: absolute; left: 948px; top: 41px; width: 310px; height: 80px; border: 1px solid #41719c; border-radius: 13px; background: #5b9bd5; color: #fff; font: bold 26px/30px Lato, sans-serif; }
.note { position: absolute; left: 568px; top: 331px; width: 250px; height: 51px; border: 1px solid #000; background: #ffffe1; color: #000; padding: 9px 2px; font: bold 12px/15px "Noto Sans", sans-serif; }
.leader { position: absolute; left: 552px; top: 331px; }
.vscroll { width: 21px; display: flex; flex-direction: column; padding: 2px 3px 0 3px; }
.vscroll button { width: 15px; height: 15px; border: 1px solid #ababab; background: #fff; display: flex; align-items: center; justify-content: center; flex: none; }
.vscroll .track { flex: 1; background: #f0f0f0; }
.vscroll .thumb { height: 21%; border: 1px solid #ababab; background: #fff; }

/* Sheet tabs */
.sheettabs { display: flex; height: 28px; background: #f5f5f5; border-top: 1px solid #ababab; align-items: center; padding-right: 21px; }
.navs { width: 100px; display: flex; justify-content: center; gap: 24px; padding-right: 14px; }
.sheettabs a { font-size: 13px; line-height: 18px; padding: 0 13px 0 12px; border-right: 1px solid #ababab; white-space: nowrap; }
.sheettabs .on { background: #fff; color: #217346; font-size: 12px; font-weight: bold; border-left: 1px solid #ababab; border-bottom: 2px solid #217346; line-height: 23px; align-self: flex-start; padding: 0 13px 0 12px; }
.add { margin-left: 32px; }
.sheettabs .dots { margin-left: auto; margin-right: 15px; }
.hscroll { width: 509px; height: 15px; display: flex; }
.hscroll button { width: 15px; border: 1px solid #ababab; background: #fff; display: flex; align-items: center; justify-content: center; }
.hscroll .track { flex: 1; background: #e8e8e8; }
.hscroll .thumb { width: 93%; height: 15px; border: 1px solid #ababab; background: #fff; }

/* Status bar */
.status { display: flex; height: 22px; background: #217346; color: #fff; align-items: center; padding: 0 9px 0 8px; font-size: 11px; }
.status .msg { margin-right: auto; }
.status button { border: 0; background: none; width: 38px; height: 22px; display: flex; align-items: center; justify-content: center; }
.status .on { background: #0e5c2f; }
.status .zm { width: 15px; }
.status input { appearance: none; width: 100px; height: 12px; background: linear-gradient(#fff, #fff) center / 100% 1px no-repeat; }
.status input::-webkit-slider-thumb { appearance: none; width: 4px; height: 11px; background: #fff; }
.zoom { margin-left: 11px; }

/* Taskbar */
.taskbar { display: flex; height: 40px; background: linear-gradient(#222 0, #6c7276 1px, #6c7276 2px, #10151c 3px, #05080d 100%); color: #fff; align-items: center; }
.taskbar > button { width: 58px; height: 38px; margin: 2px 4px 0 0; padding: 0; border: 0; background: none; display: flex; align-items: center; justify-content: center; border-radius: 3px; }
.taskbar > .start { width: 54px; margin-right: 6px; }
.taskbar > .open { border: 1px solid #8a8d90; background: linear-gradient(135deg, #85888a, #303235 50%, #26282a); }
.taskbar > .lit { background: linear-gradient(135deg, #c4c6c8, #85878a 60%, #999b9d); }
.tray { margin-left: auto; display: flex; align-items: center; gap: 9px; height: 100%; }
.lang { margin-right: 7px; font-size: 11px; }
.clock { text-align: center; margin: 0 3px 0 11px; font-size: 11px; line-height: 17px; }
.desk { width: 14px; height: 38px; border: 1px solid #666; background: linear-gradient(135deg, #777, #111 50%); }
```
